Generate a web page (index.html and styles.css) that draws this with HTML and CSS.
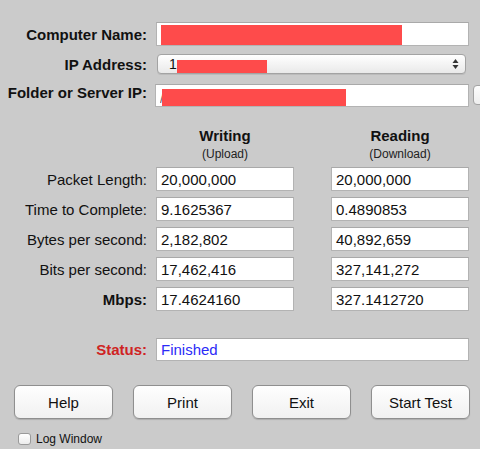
FILE: index.html
```html
<!DOCTYPE html>
<html>
<head>
<meta charset="utf-8">
<link rel="stylesheet" href="styles.css">
</head>
<body>
<div class="win">
  <div class="row r-name">
    <div class="lbl b">Computer Name:</div>
    <div class="field wide"><span class="redact red-name"></span></div>
  </div>
  <div class="row r-ip">
    <div class="lbl b">IP Address:</div>
    <div class="popup">
      <span class="ptext">1</span><span class="redact red-ip"></span>
      <svg class="arrows" width="7" height="12" viewBox="0 0 7 12"><path d="M3.5 1 L6.5 5 L0.5 5 Z M3.5 11 L6.5 7 L0.5 7 Z" fill="#333"/></svg>
    </div>
  </div>
  <div class="row r-folder">
    <div class="lbl b">Folder or Server IP:</div>
    <div class="field wide folder"><span class="slash">/</span><span class="redact red-folder"></span></div>
    <div class="browse"></div>
  </div>

  <div class="heads">
    <div class="head"><div class="h1">Writing</div><div class="h2">(Upload)</div></div>
    <div class="head"><div class="h1">Reading</div><div class="h2">(Download)</div></div>
  </div>

  <div class="data">
    <div class="row drow"><div class="lbl">Packet Length:</div><div class="field cell">20,000,000</div><div class="field cell">20,000,000</div></div>
    <div class="row drow"><div class="lbl">Time to Complete:</div><div class="field cell">9.1625367</div><div class="field cell">0.4890853</div></div>
    <div class="row drow"><div class="lbl">Bytes per second:</div><div class="field cell">2,182,802</div><div class="field cell">40,892,659</div></div>
    <div class="row drow"><div class="lbl">Bits per second:</div><div class="field cell">17,462,416</div><div class="field cell">327,141,272</div></div>
    <div class="row drow"><div class="lbl b">Mbps:</div><div class="field cell">17.4624160</div><div class="field cell">327.1412720</div></div>
  </div>

  <div class="row r-status">
    <div class="lbl b status">Status:</div>
    <div class="field wide stat">Finished</div>
  </div>

  <div class="buttons">
    <div class="btn">Help</div>
    <div class="btn">Print</div>
    <div class="btn">Exit</div>
    <div class="btn">Start Test</div>
  </div>

  <div class="logrow">
    <span class="check"></span><span class="logtxt">Log Window</span>
  </div>
</div>
</body>
</html>
```
FILE: styles.css
```css
html, body {
  margin: 0;
  padding: 0;
}
body {
  background: #cbcbcb;
  font-family: "Liberation Sans", Arial, sans-serif;
  color: #111;
  width: 480px;
  height: 449px;
  overflow: hidden;
}
.win {
  padding-top: 22px;
}
.row {
  display: flex;
  align-items: center;
}
.lbl {
  width: 147px;
  flex: none;
  text-align: right;
  font-size: 15px;
  white-space: nowrap;
}
.b {
  font-weight: bold;
}
.field {
  box-sizing: border-box;
  background: #fff;
  border: 1px solid #b3b3b3;
  border-top-color: #a9a9a9;
  font-size: 15px;
  line-height: 21px;
  padding-left: 4px;
  display: flex;
  align-items: center;
  flex: none;
}
.wide {
  margin-left: 9px;
  width: 313px;
  height: 24px;
}
.redact {
  display: inline-block;
  background: #fe4b4b;
}
.red-name {
  width: 241px;
  height: 20px;
  margin-top: 2px;
}
.r-ip {
  margin-top: 8px;
}
.popup {
  box-sizing: border-box;
  margin-left: 10px;
  width: 309px;
  height: 20px;
  border: 1px solid #a3a3a3;
  border-radius: 4px;
  background: linear-gradient(#ffffff, #f4f4f4 50%, #e9e9e9);
  box-shadow: 0 1px 0 rgba(0,0,0,0.08);
  display: flex;
  align-items: flex-end;
  padding-left: 11px;
  position: relative;
  font-size: 14px;
}
.ptext {
  line-height: 18px;
}
.red-ip {
  width: 90px;
  height: 13px;
  margin-bottom: 0;
}
.arrows {
  position: absolute;
  right: 6px;
  top: 3px;
}
.r-folder {
  margin-top: 10px;
  align-items: flex-start;
}
.folder {
  height: 23px;
  width: 314px;
  margin-left: 8px;
  align-items: flex-end;
}
.slash {
  font-size: 12px;
  line-height: 14px;
  color: #555;
  width: 2px;
  overflow: hidden;
}
.red-folder {
  width: 184px;
  height: 17px;
}
.browse {
  box-sizing: border-box;
  margin-left: 4px;
  margin-top: 1px;
  width: 30px;
  height: 20px;
  flex: none;
  border: 1px solid #a3a3a3;
  border-radius: 4px;
  background: linear-gradient(#fdfdfd, #eeeeee);
}
.heads {
  display: flex;
  margin-top: 20px;
  padding-left: 156px;
  gap: 37px;
}
.head {
  width: 138px;
  text-align: center;
}
.h1 {
  font-size: 15px;
  font-weight: bold;
  line-height: 17px;
}
.h2 {
  font-size: 12px;
  line-height: 14px;
  margin-top: 3px;
  color: #222;
}
.data {
  margin-top: 6px;
  display: flex;
  flex-direction: column;
  gap: 6px;
}
.cell {
  width: 138px;
  height: 24px;
  margin-left: 9px;
}
.cell + .cell {
  margin-left: 37px;
}
.r-status {
  margin-top: 27px;
}
.status {
  color: #cf2323;
}
.stat {
  height: 23px;
  color: #2b2bf7;
}
.buttons {
  display: flex;
  gap: 20px;
  margin-top: 24px;
  padding-left: 14px;
}
.btn {
  box-sizing: border-box;
  width: 99px;
  height: 34px;
  border: 1px solid #8f8f8f;
  border-radius: 6px;
  background: linear-gradient(#fefefe, #f1f1f1);
  box-shadow: 0 1px 1px rgba(0,0,0,0.15);
  font-size: 15px;
  display: flex;
  align-items: center;
  justify-content: center;
  color: #111;
}
.logrow {
  display: flex;
  align-items: center;
  margin-top: 13px;
  padding-left: 18px;
}
.check {
  box-sizing: border-box;
  width: 13px;
  height: 12px;
  border: 1px solid #9a9a9a;
  border-radius: 3px;
  background: linear-gradient(#ffffff, #ececec);
}
.logtxt {
  font-size: 12px;
  margin-left: 5px;
  line-height: 14px;
}
```
